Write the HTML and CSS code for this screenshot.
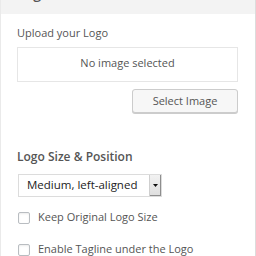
FILE: index.html
```html
<!DOCTYPE html>
<html>
<head>
<meta charset="utf-8">
<link rel="stylesheet" href="styles.css">
</head>
<body>
<div class="panel">
  <div class="header"><span class="header-title">Logo</span></div>
  <div class="content">
    <div class="label">Upload your Logo</div>
    <div class="placeholder">No image selected</div>
    <div class="actions"><button class="btn">Select Image</button></div>
    <div class="heading">Logo Size &amp; Position</div>
    <div class="select">
      <span class="select-text">Medium, left-aligned</span>
      <span class="select-arrow"><svg width="5" height="3" viewBox="0 0 5 3"><path d="M0 0h5L2.5 3z" fill="#111"/></svg></span>
    </div>
    <label class="check first"><span class="box"></span><span class="check-text">Keep Original Logo Size</span></label>
    <label class="check second"><span class="box"></span><span class="check-text">Enable Tagline under the Logo</span></label>
  </div>
</div>
</body>
</html>
```
FILE: styles.css
```css
html, body {
  margin: 0;
  padding: 0;
  background: #fff;
}
body {
  font-family: "Open Sans", "Noto Sans", sans-serif;
  color: #555;
}
.panel {
  width: 256px;
  height: 256px;
  box-sizing: border-box;
  border-left: 1px solid #eaeaea;
  border-right: 1px solid #dcdcdc;
  overflow: hidden;
  display: flex;
  flex-direction: column;
}
.header {
  height: 14px;
  background: #f3f3f3;
  overflow: hidden;
  padding-left: 16px;
  flex: none;
}
.header-title {
  display: block;
  font-size: 14px;
  line-height: 20px;
  margin-top: -16px;
  font-weight: 600;
  color: #555;
}
.content {
  padding: 0 17px 0 16px;
  display: flex;
  flex-direction: column;
}
.label {
  margin-top: 11px;
  font-size: 11px;
  line-height: 15px;
}
.placeholder {
  margin-top: 7px;
  height: 35px;
  box-sizing: border-box;
  border: 1px solid #e6e6e6;
  padding: 7px 0 0;
  text-align: center;
  font-size: 11px;
  line-height: 15px;
}
.actions {
  display: flex;
  justify-content: flex-end;
  margin-top: 7px;
}
.btn {
  width: 106px;
  height: 24px;
  box-sizing: border-box;
  margin: 0;
  padding: 0;
  border: 1px solid #cccccc;
  border-radius: 3px;
  background: #f7f7f7;
  box-shadow: 0 1px 0 #cccccc;
  font-family: "Open Sans", "Noto Sans", sans-serif;
  font-size: 11px;
  line-height: 22px;
  color: #555;
}
.heading {
  margin-top: 35px;
  font-size: 12px;
  line-height: 18px;
  font-weight: 600;
  color: #555;
}
.select {
  margin-top: 8px;
  margin-left: 1px;
  width: 144px;
  height: 23px;
  box-sizing: border-box;
  border: 1px solid #dcdcdc;
  display: flex;
  align-items: stretch;
  background: #fff;
}
.select-text {
  flex: 1;
  padding-left: 8px;
  font-size: 11.5px;
  line-height: 20px;
  color: #222;
}
.select-arrow {
  width: 12px;
  background: linear-gradient(#f2f2f2, #dedede);
  border-left: 1px solid #cfcfcf;
  box-shadow: inset -1px -1px 0 #8e8e8e;
  display: flex;
  align-items: center;
  justify-content: center;
  padding-right: 1px;
  box-sizing: border-box;
}
.select-arrow svg {
  display: block;
}
.check {
  display: flex;
  align-items: flex-start;
  margin-left: 1px;
  font-size: 11px;
  line-height: 15px;
}
.check.first {
  margin-top: 12px;
}
.check.second {
  margin-top: 17px;
}
.box {
  width: 12px;
  height: 12px;
  box-sizing: border-box;
  margin-top: 3px;
  border: 1px solid #b9bdc1;
  border-radius: 2px;
  background: #fff;
  box-shadow: inset 0 1px 2px rgba(0,0,0,0.08);
  flex: none;
}
.check-text {
  margin-left: 8px;
}
```
